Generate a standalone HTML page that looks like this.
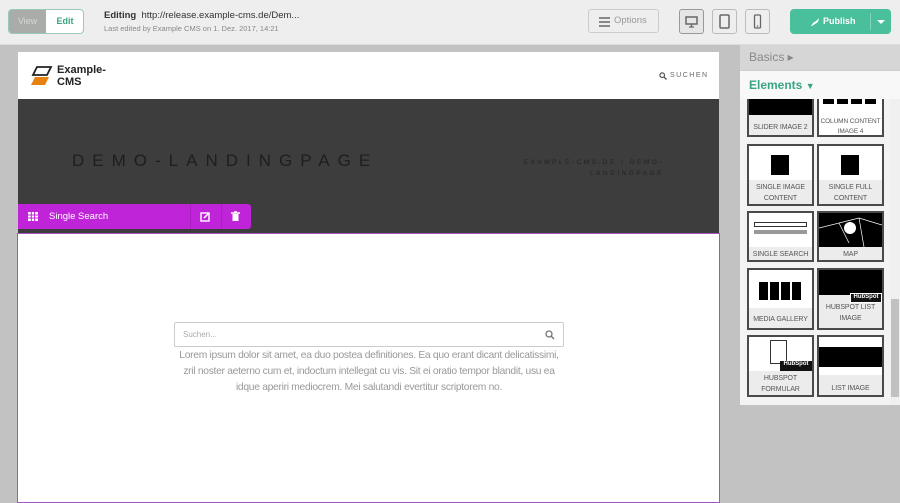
<!DOCTYPE html>
<html><head><meta charset="utf-8"><style>
*{box-sizing:border-box;margin:0;padding:0}
body{width:900px;height:498px;overflow:hidden;background:#c2c2c2;font-family:"Liberation Sans",sans-serif;position:relative}
.top{position:absolute;left:0;top:0;width:900px;height:45px;background:#eeeeee;border-bottom:1px solid #ddd}
.abs{position:absolute}
.tile{position:absolute;width:67px;border:2px solid #4a4a4a;background:#ececec;overflow:hidden}
.tile .img{height:34px;background:#fff;position:relative}
.tile .lab{font-size:7px;letter-spacing:-.1px;color:#555;text-align:center;line-height:11px;padding-top:2px;white-space:nowrap}
</style></head><body>
<div class="top">
 <div class="abs" style="left:8px;top:9px;width:76px;height:25px;border:1px solid #9bc9b9;border-radius:4px;overflow:hidden;background:#fff">
  <div class="abs" style="left:0;top:0;width:37px;height:23px;background:#a9aca9;color:#d7d7d7;font-size:9px;line-height:23px;text-align:center">View</div>
  <div class="abs" style="left:37px;top:0;width:38px;height:23px;color:#3aa585;font-size:9px;font-weight:bold;line-height:23px;text-align:center">Edit</div>
 </div>
 <div class="abs" style="left:104px;top:10px;font-size:9.5px;color:#333"><b>Editing</b>&nbsp; http://release.example-cms.de/Dem...</div>
 <div class="abs" style="left:104px;top:24px;font-size:7.5px;color:#888">Last edited by Example CMS on 1. Dez. 2017, 14:21</div>
 <div class="abs" style="left:588px;top:9px;width:71px;height:24px;border:1px solid #ccc;border-radius:3px;color:#999;font-size:9.5px;line-height:22px;padding-left:25px">Options
  <div class="abs" style="left:10px;top:7px;width:11px;height:2px;background:#888;box-shadow:0 4px 0 #888,0 8px 0 #888"></div></div>
 <div class="abs" style="left:679px;top:9px;width:25px;height:25px;border:1px solid #999;border-radius:3px;background:#e6e6e6"><svg width="23" height="23"><rect x="6" y="7" width="11" height="7" fill="none" stroke="#666" stroke-width="1.5"/><path d="M9 17h5M11.5 14v3" stroke="#666" stroke-width="1.3"/></svg></div>
 <div class="abs" style="left:712px;top:9px;width:25px;height:25px;border:1px solid #bbb;border-radius:3px"><svg width="23" height="23"><rect x="7" y="5" width="9" height="13" rx="1" fill="none" stroke="#666" stroke-width="1.5"/></svg></div>
 <div class="abs" style="left:745px;top:9px;width:25px;height:25px;border:1px solid #bbb;border-radius:3px"><svg width="23" height="23"><rect x="8.5" y="5" width="6" height="13" rx="1" fill="none" stroke="#666" stroke-width="1.3"/><circle cx="11.5" cy="16" r=".8" fill="#666"/></svg></div>
 <div class="abs" style="left:790px;top:9px;width:101px;height:25px;background:#4abf9b;border-radius:4px;color:#fff;font-size:9px;font-weight:bold;line-height:25px;padding-left:33px">Publish
  <svg class="abs" style="left:20px;top:8px" width="10" height="10"><path d="M1 9L3 6 6 4 9 1 8 5 5 7 2 9Z" fill="#fff"/></svg>
  <div class="abs" style="left:80px;top:4px;width:1px;height:17px;background:#7fd3b8"></div>
  <div class="abs" style="left:87px;top:11px;border-left:4px solid transparent;border-right:4px solid transparent;border-top:4px solid #fff"></div>
 </div>
</div>
<div class="abs" style="left:18px;top:52px;width:701px;height:47px;background:#fff">
 <svg class="abs" style="left:13px;top:13px" width="22" height="22"><path d="M6 2h14l-4 8H2Z" fill="none" stroke="#222" stroke-width="1.8"/><path d="M4 12h14l-4 8H0Z" fill="#e8820f"/></svg>
 <div class="abs" style="left:39px;top:12px;font-size:11px;font-weight:bold;color:#222;line-height:12px">Example-<br>CMS</div>
 <svg class="abs" style="left:641px;top:20px" width="8" height="8"><circle cx="3.2" cy="3.2" r="2.3" fill="none" stroke="#555" stroke-width="1.2"/><path d="M5 5l2.5 2.5" stroke="#555" stroke-width="1.3"/></svg>
 <div class="abs" style="left:652px;top:20px;font-size:7px;color:#666;letter-spacing:1.5px">SUCHEN</div>
</div>
<div class="abs" style="left:18px;top:99px;width:701px;height:134px;background:#3d3d3d">
 <div class="abs" style="left:54px;top:52px;font-size:17px;letter-spacing:8px;color:#1e1e1e">DEMO-LANDINGPAGE</div>
 <div class="abs" style="left:490px;top:58px;width:156px;font-size:6.5px;letter-spacing:2.5px;color:#222;text-align:right;line-height:11px">EXAMPLE-CMS.DE / DEMO-<br>LANDINGPAGE</div>
</div>
<div class="abs" style="left:18px;top:204px;width:233px;height:25px;background:#c024d9;border-radius:0 3px 3px 0;color:#fff;font-size:9.5px;line-height:25px">
 <svg class="abs" style="left:10px;top:8px" width="10" height="9"><rect width="10" height="9" fill="#fff"/><path d="M3.3 0v9M6.6 0v9M0 3h10M0 6h10" stroke="#c024d9"/></svg>
 <span class="abs" style="left:31px">Single Search</span>
 <div class="abs" style="left:172px;top:0;width:1px;height:25px;background:#a91fc0"></div>
 <div class="abs" style="left:203px;top:0;width:1px;height:25px;background:#a91fc0"></div>
 <svg class="abs" style="left:182px;top:8px" width="10" height="10"><rect x="1" y="1" width="8" height="8" fill="none" stroke="#fff" stroke-width="1.4"/><path d="M4 6l5-5" stroke="#fff" stroke-width="1.5"/></svg>
 <svg class="abs" style="left:213px;top:7px" width="9" height="11"><path d="M0 2h9M3 1h3" stroke="#fff" stroke-width="1.4"/><rect x="1.5" y="3" width="6" height="7" fill="#fff"/></svg>
</div>
<div class="abs" style="left:17px;top:233px;width:703px;height:270px;background:#fff;border:1px solid #a855c0">
 <div class="abs" style="left:156px;top:88px;width:390px;height:25px;border:1px solid #ccc;border-radius:2px;font-size:8px;color:#aaa;line-height:23px;padding-left:8px">Suchen...
  <svg class="abs" style="left:370px;top:7px" width="10" height="10"><circle cx="4" cy="4" r="3" fill="none" stroke="#777" stroke-width="1.3"/><path d="M6 6l3 3" stroke="#777" stroke-width="1.5"/></svg></div>
 <div class="abs" style="left:100px;top:114px;width:502px;font-size:10.3px;color:#999;text-align:center;line-height:16px;letter-spacing:-.3px;white-space:nowrap">Lorem ipsum dolor sit amet, ea duo postea definitiones. Ea quo erant dicant delicatissimi,<br>zril noster aeterno cum et, indoctum intellegat cu vis. Sit ei oratio tempor blandit, usu ea<br>idque aperiri mediocrem. Mei salutandi evertitur scriptorem no.</div>
</div>
<div class="abs" style="left:740px;top:45px;width:160px;height:25px;background:#d6d6d6;color:#888;font-size:12px;line-height:25px;padding-left:9px">Basics &#9656;</div>
<div class="abs" style="left:740px;top:70px;width:160px;height:29px;background:#f8f8f8;border-top:1px solid #ccc;color:#3aa585;font-size:12px;font-weight:bold;line-height:29px;padding-left:9px">Elements <span style="font-size:9px">&#9660;</span></div>
<div class="abs" style="left:740px;top:99px;width:160px;height:306px;background:#f3f3f3;overflow:hidden">
 <div class="abs" style="left:150px;top:0;width:10px;height:306px;background:#f0f0f0"></div>
 <div class="abs" style="left:151px;top:200px;width:8px;height:98px;background:#c1c1c1"></div>
 <div class="tile" style="left:7px;top:-6px;height:44px"><div class="img" style="height:20px;background:#000"></div><div class="lab" style="padding-top:7px">SLIDER IMAGE 2</div></div>
 <div class="tile" style="left:77px;top:-6px;height:44px"><div class="img" style="height:20px"><div class="abs" style="left:4px;top:4px;width:55px;height:5px;background:repeating-linear-gradient(90deg,#000 0 11px,#fff 11px 14px)"></div></div><div class="lab" style="font-size:6.5px;line-height:10px;background:#fff">COLUMN CONTENT<br>IMAGE 4</div></div>
 <div class="tile" style="left:7px;top:45px;height:62px"><div class="img"><div class="abs" style="left:22px;top:9px;width:18px;height:20px;background:#000"></div></div><div class="lab">SINGLE IMAGE<br>CONTENT</div></div>
 <div class="tile" style="left:77px;top:45px;height:62px"><div class="img"><div class="abs" style="left:22px;top:9px;width:18px;height:20px;background:#000"></div></div><div class="lab">SINGLE FULL<br>CONTENT</div></div>
 <div class="tile" style="left:7px;top:112px;height:51px"><div class="img"><div class="abs" style="left:5px;top:9px;width:53px;height:5px;border:1px solid #333"></div><div class="abs" style="left:5px;top:17px;width:53px;height:4px;background:#999"></div></div><div class="lab">SINGLE SEARCH</div></div>
 <div class="tile" style="left:77px;top:112px;height:51px"><div class="img" style="background:#000"><svg width="63" height="34"><path d="M0 15L20 10 30 30M20 10L40 5 63 12M40 5L45 34" stroke="#fff" stroke-width=".7" fill="none"/><circle cx="31" cy="15" r="6" fill="#fff"/></svg></div><div class="lab">MAP</div></div>
 <div class="tile" style="left:7px;top:169px;height:62px"><div class="img" style="height:38px"><div class="abs" style="left:10px;top:12px;width:44px;height:18px;background:repeating-linear-gradient(90deg,#000 0 9px,#fff 9px 11px)"></div></div><div class="lab" style="padding-top:6px">MEDIA GALLERY</div></div>
 <div class="tile" style="left:77px;top:169px;height:62px"><div class="img" style="background:#000;height:25px"><div class="abs" style="right:0;bottom:-8px;width:32px;height:10px;background:#111;border:1px solid #fff;color:#fff;font-size:6px;font-weight:bold;text-align:center">HubSpot</div></div><div class="lab" style="padding-top:7px">HUBSPOT LIST<br>IMAGE</div></div>
 <div class="tile" style="left:7px;top:236px;height:62px"><div class="img"><div class="abs" style="left:21px;top:3px;width:17px;height:24px;border:1px solid #333;background:#fff"></div><div class="abs" style="right:0;bottom:0;width:32px;height:10px;background:#111;color:#fff;font-size:6px;font-weight:bold;text-align:center">HubSpot</div></div><div class="lab">HUBSPOT<br>FORMULAR</div></div>
 <div class="tile" style="left:77px;top:236px;height:62px"><div class="img" style="height:38px"><div class="abs" style="left:0;top:10px;width:63px;height:20px;background:#000"></div></div><div class="lab" style="padding-top:8px">LIST IMAGE</div></div>
</div>
</body></html>
